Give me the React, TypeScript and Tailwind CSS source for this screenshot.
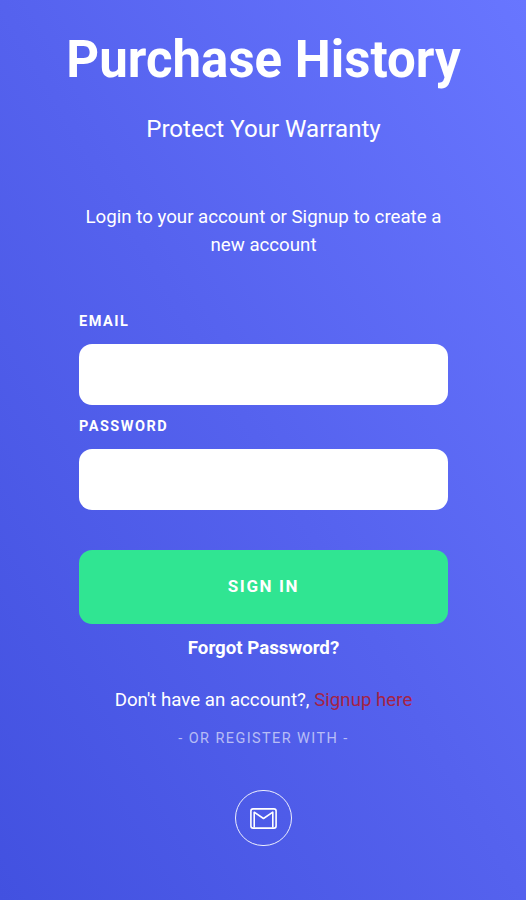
import React, { useState } from 'react';

// ─── Helper Components ──────────────────────────────────────────────────────

interface FieldProps {
  id: string;
  label: string;
  type: string;
  value: string;
  onChange: (value: string) => void;
}

const Field: React.FC<FieldProps> = ({ id, label, type, value, onChange }) => (
  <div className="flex flex-col">
    <label htmlFor={id} className="h-[33px] pt-px text-[14.5px] leading-5 font-bold tracking-[1.5px] uppercase">
      {label}
    </label>
    <input
      id={id}
      type={type}
      value={value}
      onChange={e => onChange(e.target.value)}
      className="h-[61px] w-full rounded-[13px] bg-white px-4 text-lg text-slate-800 outline-none"
    />
  </div>
);

const MailIcon: React.FC = () => (
  <svg width="27" height="21" viewBox="0 0 27 21" fill="none" stroke="currentColor" strokeWidth="1.6" strokeLinejoin="round">
    <rect x="0.9" y="0.9" width="25.2" height="19.2" rx="2.2" />
    <path d="M4.2 19.5V4.2l9.3 6.3 9.3-6.3v15.3" />
  </svg>
);

// ─── Main Page Component ────────────────────────────────────────────────────

export default function App() {
  const [email, setEmail] = useState('');
  const [password, setPassword] = useState('');

  return (
    <div className="min-h-screen overflow-hidden bg-[linear-gradient(to_bottom_left,#6876ff_0%,#5562ee_50%,#4251e0_100%)] pl-px font-[Roboto,sans-serif] text-white">
      <header className="flex flex-col items-center pt-[30px] text-center">
        <h1 className="text-[51px] leading-[60px] font-bold whitespace-nowrap">Purchase History</h1>
        <p className="mt-[23px] text-[24.1px] leading-8">Protect Your Warranty</p>
      </header>

      <main className="mx-auto w-[369px]">
        <p className="mt-[58px] text-center text-[18.7px] leading-7">
          Login to your account or Signup to create a new account
        </p>

        <form className="mt-[52px]" onSubmit={e => e.preventDefault()}>
          <div className="flex flex-col gap-[11px]">
            <Field id="email" label="Email" type="email" value={email} onChange={setEmail} />
            <Field id="password" label="Password" type="password" value={password} onChange={setPassword} />
          </div>
          <button
            type="submit"
            className="mt-[40px] h-[74px] w-full rounded-[13px] bg-[#30e592] text-[17px] font-bold tracking-[1.6px] uppercase"
          >
            Sign in
          </button>
        </form>

        <div className="flex flex-col items-center">
          <a href="#forgot" className="mt-[10px] text-[18.7px] leading-7 font-bold">Forgot Password?</a>
          <p className="mt-[24px] text-[18.7px] leading-7">
            Don't have an account?, <a href="#signup" className="text-[#a52346]">Signup here</a>
          </p>
          <p className="mt-[15px] text-[14.5px] leading-5 tracking-[1.4px] text-white/60 uppercase">- or register with -</p>
          <button aria-label="Register with email" className="mt-[41px] flex h-14 w-[57px] items-center justify-center rounded-full border border-white/90">
            <MailIcon />
          </button>
        </div>
      </main>
    </div>
  );
}
